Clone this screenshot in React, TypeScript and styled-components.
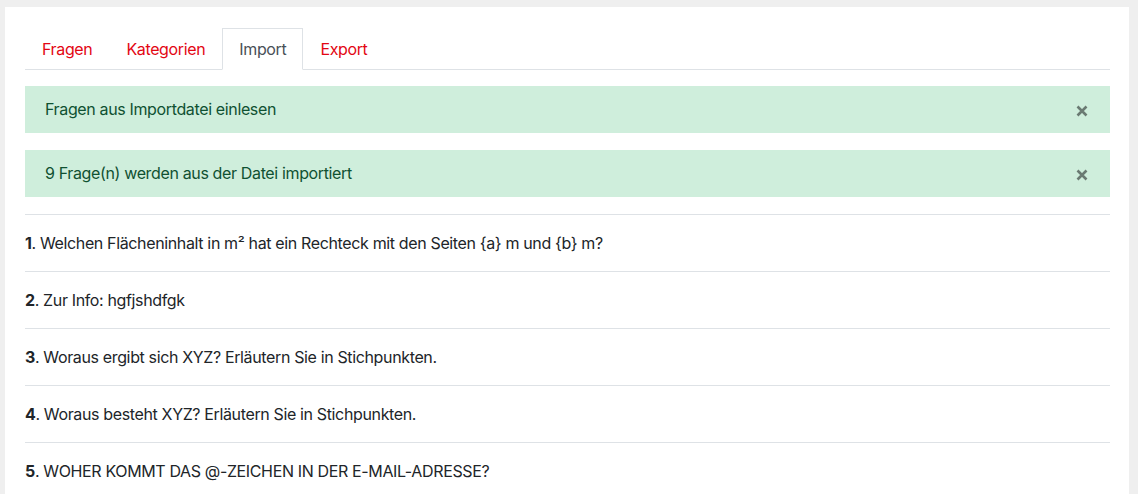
import React from "react";
import styled, { createGlobalStyle } from "styled-components";

const GlobalStyle = createGlobalStyle`
  html, body {
    margin: 0;
    background: #efefef;
    font-family: Inter, "Noto Sans", sans-serif;
    letter-spacing: -0.36px;
    color: #212529;
  }
  body {
    padding: 7px 9px 0 5px;
  }
`;

const Card = styled.div`
  background: #fff;
  padding: 21px 19px 0 20px;
  min-height: 487px;
  box-sizing: border-box;
`;

const Tabs = styled.ul`
  display: flex;
  list-style: none;
  margin: 0 0 16px;
  padding: 0;
  border-bottom: 1px solid #dee2e6;
`;

const Tab = styled.li<{ $active?: boolean }>`
  margin-bottom: -1px;
  padding: 8px 16px;
  font-size: 16px;
  line-height: 24px;
  border: 1px solid ${(p) => (p.$active ? "#dee2e6" : "transparent")};
  border-bottom-color: ${(p) => (p.$active ? "#fff" : "transparent")};
  background: ${(p) => (p.$active ? "#fff" : "transparent")};
  color: ${(p) => (p.$active ? "#495057" : "#e30613")};
  cursor: pointer;
`;

const Alert = styled.div`
  display: flex;
  align-items: center;
  justify-content: space-between;
  background: #cfeedc;
  color: #0f5132;
  padding: 11px 20px;
  margin-bottom: 17px;
  font-size: 16px;
  line-height: 25px;
`;

const Close = styled.button`
  border: 0;
  background: none;
  padding: 0;
  margin: 3px 2px 0 0;
  width: 12px;
  height: 12px;
  display: flex;
  align-items: center;
  justify-content: center;
  cursor: pointer;
`;

const List = styled.ol`
  list-style: none;
  margin: 0;
  padding: 0;
`;

const Item = styled.li`
  border-top: 1px solid #dee2e6;
  padding: 16px 0;
  font-size: 16px;
  line-height: 24px;
`;

const Num = styled.b`
  font-weight: 700;
`;

const CloseIcon = () => (
  <svg width="12" height="12" viewBox="0 0 12 12">
    <path d="M1.5 1.5 L10.5 10.5 M10.5 1.5 L1.5 10.5" stroke="#6a7a72" strokeWidth="2.6" />
  </svg>
);

const questions = [
  "Welchen Flächeninhalt in m² hat ein Rechteck mit den Seiten {a} m und {b} m?",
  "Zur Info: hgfjshdfgk",
  "Woraus ergibt sich XYZ? Erläutern Sie in Stichpunkten.",
  "Woraus besteht XYZ? Erläutern Sie in Stichpunkten.",
  "WOHER KOMMT DAS @-ZEICHEN IN DER E-MAIL-ADRESSE?",
];

export default function App() {
  return (
    <>
      <GlobalStyle />
      <Card>
        <Tabs>
          <Tab>Fragen</Tab>
          <Tab>Kategorien</Tab>
          <Tab $active>Import</Tab>
          <Tab>Export</Tab>
        </Tabs>
        <Alert>
          Fragen aus Importdatei einlesen
          <Close aria-label="close"><CloseIcon /></Close>
        </Alert>
        <Alert>
          9 Frage(n) werden aus der Datei importiert
          <Close aria-label="close"><CloseIcon /></Close>
        </Alert>
        <List>
          {questions.map((q, i) => (
            <Item key={i}>
              <Num>{i + 1}</Num>. {q}
            </Item>
          ))}
        </List>
      </Card>
    </>
  );
}
